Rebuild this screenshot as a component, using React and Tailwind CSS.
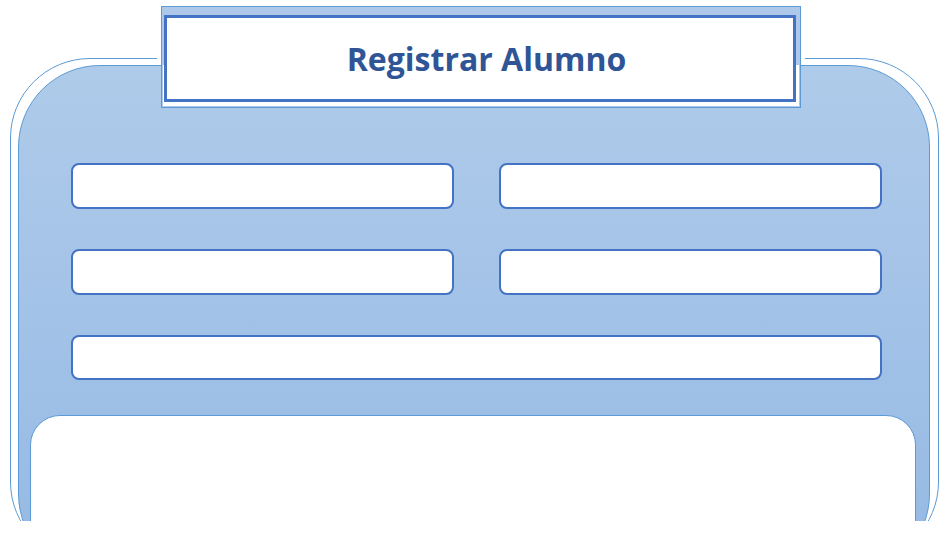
import React from "react";

function Field({ className = "" }) {
  return (
    <div
      className={`h-[46px] rounded-[8px] border-2 border-[#4472c4] bg-white ${className}`}
    />
  );
}

export default function App() {
  return (
    <div className="relative h-[533px] w-[949px] overflow-hidden bg-white">
      <div className="relative h-[521px] w-[949px] overflow-hidden">
        {/* outer outline */}
        <div className="absolute left-[10px] top-[58px] h-[504px] w-[929px] rounded-[80px] border border-[#5b9bd5] bg-white" />
        {/* white gap around the title frame */}
        <div className="absolute left-[157px] top-[40px] h-[30px] w-[648px] bg-white" />

        {/* main blue panel */}
        <div className="relative ml-[18px] mt-[65px] h-[511px] w-[912px] rounded-[82px] border border-[#5b9bd5] bg-gradient-to-b from-[#afcbea] to-[#95b9e4]">
          <div className="grid grid-cols-2 gap-x-[45px] gap-y-[40px] pl-[52px] pr-[47px] pt-[97px]">
            <Field />
            <Field />
            <Field />
            <Field />
            <Field className="col-span-2 !h-[45px]" />
          </div>
          <div className="ml-[11px] mr-[13px] mt-[35px] h-[160px] rounded-[30px] border border-[#5b9bd5] bg-white" />
        </div>

        {/* title frame */}
        <div className="absolute left-[161px] top-[6px] h-[102px] w-[640px] border border-[#5b9bd5] bg-[#adc8e8] pl-[2px] pt-[8px]">
          <div className="absolute left-[1px] top-[58px] h-[41px] w-[636px] bg-white" />
          <div className="relative flex h-[87px] w-[632px] items-center justify-center border-[3px] border-[#4472c4] bg-white pl-[13px]">
            <span
              className="text-[32px] font-bold leading-none text-[#2f5597]"
              style={{ fontFamily: '"Open Sans", "Noto Sans", sans-serif' }}
            >
              Registrar Alumno
            </span>
          </div>
        </div>
      </div>
    </div>
  );
}
